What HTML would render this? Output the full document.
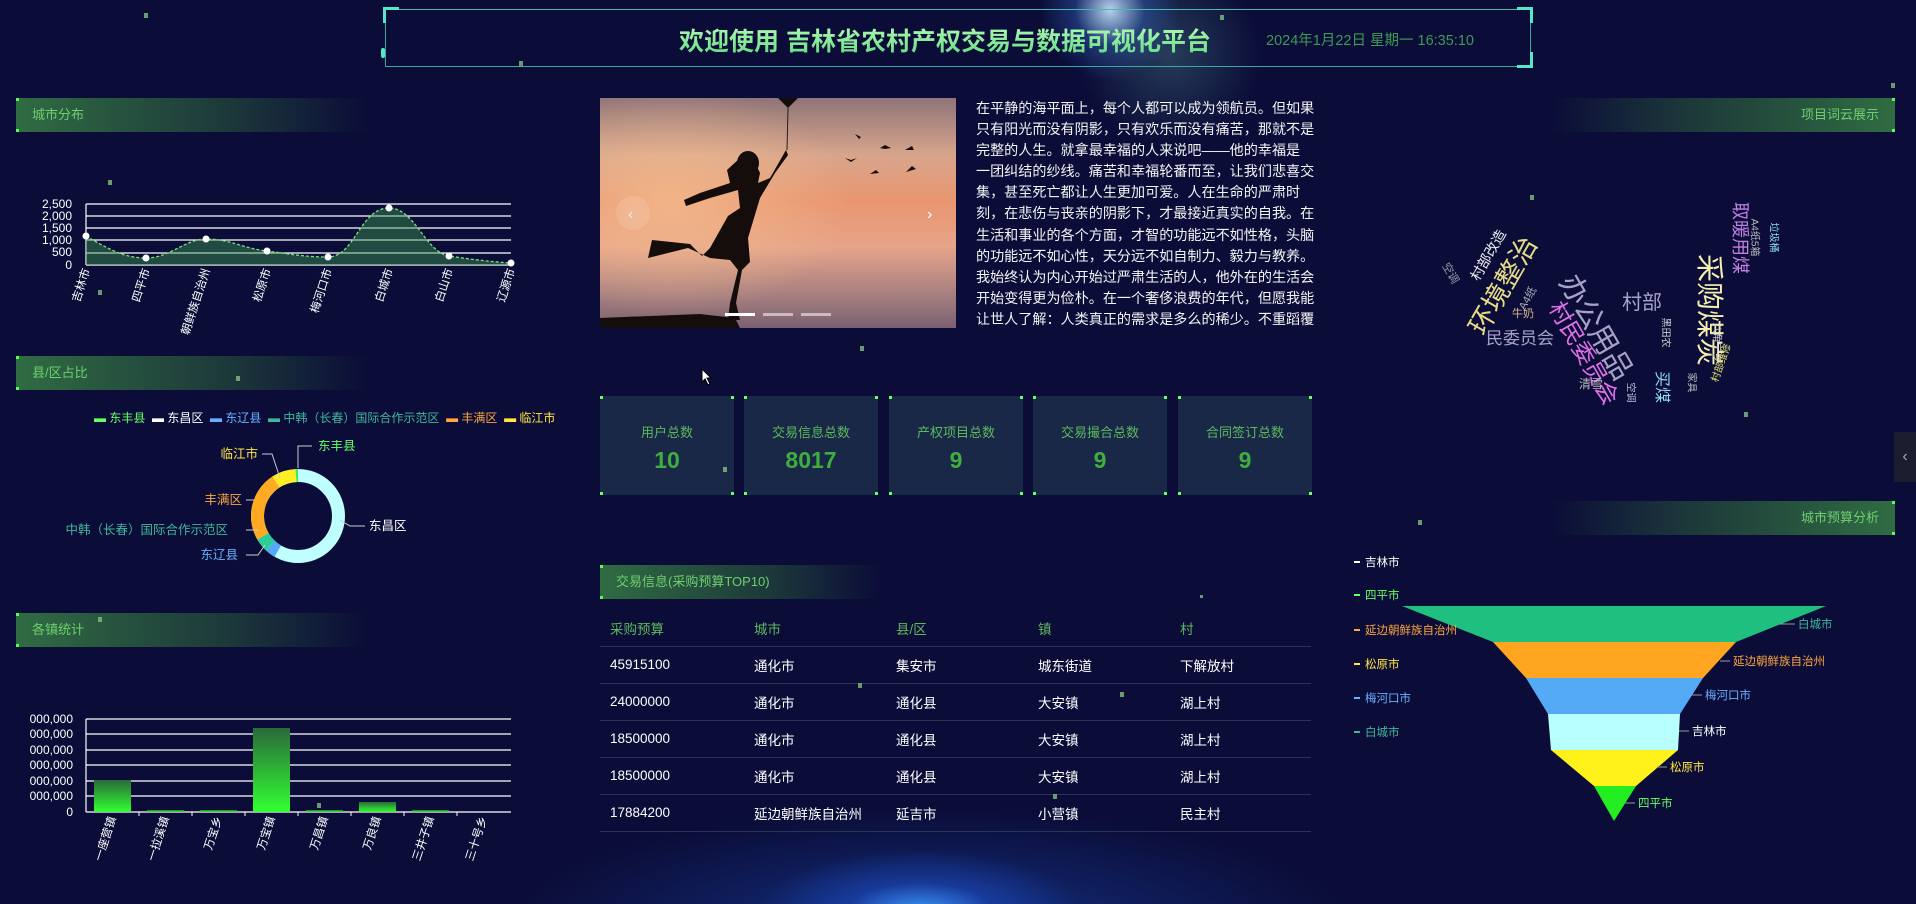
<!DOCTYPE html>
<html><head><meta charset="utf-8">
<style>
*{margin:0;padding:0;box-sizing:border-box}
body{width:1916px;height:904px;overflow:hidden;position:relative;font-family:"Liberation Sans","Noto Sans CJK SC",sans-serif;
background:radial-gradient(ellipse 160px 60px at 920px 910px,rgba(60,150,255,.95),rgba(30,80,200,.5) 45%,transparent 100%),
radial-gradient(ellipse 420px 120px at 930px 930px,rgba(30,90,220,.45),transparent 100%),
radial-gradient(circle 70px at 1110px 10px,rgba(200,230,255,.9),rgba(60,120,220,.35) 50%,transparent 100%),
radial-gradient(circle 90px at 1170px 55px,rgba(120,200,190,.25),transparent 100%),
#0b0d38;}
.abs{position:absolute}
.bar{position:absolute;height:34px;font-size:13px;color:#6fcf6f;line-height:34px;padding-left:16px}
.bl{background:linear-gradient(90deg,rgba(60,140,70,.75),rgba(50,110,60,.45) 60%,rgba(40,80,60,0));}
.br{background:linear-gradient(270deg,rgba(60,140,70,.75),rgba(50,110,60,.45) 60%,rgba(40,80,60,0));text-align:right;padding-right:16px}
.bar:before,.bar:after{content:"";position:absolute;width:3px;height:3px;background:#5f5}
.bl:before{left:0;top:0}.bl:after{left:0;bottom:0}
.br:before{right:0;top:0}.br:after{right:0;bottom:0}
.stat{position:absolute;top:396px;width:134px;height:99px;background:#1a2848;text-align:center}
.stat .l{margin-top:26px;font-size:13px;color:#5cb85c}
.stat .n{margin-top:6px;font-size:23px;color:#3fae3f;font-weight:bold}
.stat i{position:absolute;width:3px;height:3px;background:#6f6}
.dot{position:absolute;width:4px;height:5px;background:#7fbf7f;opacity:.8}
.p{position:absolute;left:976px;top:98px;font-size:14.1px;line-height:21.1px;color:#f4f4f4;white-space:nowrap}
table{position:absolute;left:600px;top:610px;width:711px;border-collapse:collapse;font-size:13.5px}
td{height:37px;padding-left:10px;color:#fff;border-bottom:1px solid #2a3258}
tr.h td{color:#5cb85c;height:36px}
.wc{position:absolute;white-space:nowrap;transform-origin:center}
</style></head><body>

<!-- header -->
<div class="abs" style="left:385px;top:9px;width:1146px;height:58px;border:1px solid #3aa7a0;border-top-color:#4bb8b0"></div>
<div class="abs" style="left:383px;top:7px;width:16px;height:16px;border-left:3px solid #55e8c8;border-top:3px solid #55e8c8"></div>
<div class="abs" style="left:1517px;top:7px;width:16px;height:16px;border-right:3px solid #55e8c8;border-top:3px solid #55e8c8"></div>
<div class="abs" style="left:1517px;top:52px;width:16px;height:16px;border-right:3px solid #55e8c8;border-bottom:3px solid #55e8c8"></div>
<div class="abs" style="left:381px;top:48px;width:4px;height:10px;background:#55e8c8;border-radius:2px"></div>
<div class="abs" style="left:679px;top:22px;font-size:25px;font-weight:bold;color:#9af59a;white-space:nowrap;background:linear-gradient(180deg,#b8ffb8,#5fd87f);-webkit-background-clip:text;background-clip:text;-webkit-text-fill-color:transparent">欢迎使用 吉林省农村产权交易与数据可视化平台</div>
<div class="abs" style="left:1266px;top:29px;font-size:14.5px;color:#3d9a55;white-space:nowrap">2024年1月22日 星期一 16:35:10</div>

<!-- left bars -->
<div class="bar bl" style="left:16px;top:98px;width:351px">城市分布</div>
<div class="bar bl" style="left:16px;top:356px;width:351px">县/区占比</div>
<div class="bar bl" style="left:16px;top:613px;width:351px">各镇统计</div>
<div class="bar br" style="left:1552px;top:98px;width:343px">项目词云展示</div>
<div class="bar br" style="left:1552px;top:501px;width:343px">城市预算分析</div>
<div class="bar bl" style="left:600px;top:565px;width:280px">交易信息(采购预算TOP10)</div>

<!-- line chart -->
<svg class="abs" style="left:0;top:190px" width="560" height="150" font-family="Liberation Sans,Noto Sans CJK SC,sans-serif">
<g stroke="#fff" stroke-width="1.2"><line x1="86" y1="14" x2="511" y2="14"/><line x1="86" y1="26" x2="511" y2="26"/><line x1="86" y1="38" x2="511" y2="38"/><line x1="86" y1="50" x2="511" y2="50"/><line x1="86" y1="63" x2="511" y2="63"/><line x1="86" y1="75" x2="511" y2="75"/><line x1="86" y1="14" x2="86" y2="75"/></g>
<g fill="#fff" font-size="12" text-anchor="end"><text x="72" y="18">2,500</text><text x="72" y="30">2,000</text><text x="72" y="42">1,500</text><text x="72" y="54">1,000</text><text x="72" y="66">500</text><text x="72" y="79">0</text></g>
<path d="M86,46 C110,60 125,68 146,68 C170,68 185,49 206,49 C230,49 245,59 267,61 C290,64 305,67 328,67 C355,67 360,18 389,18 C415,18 425,62 449,66 C475,70 495,72 511,73 L511,75 L86,75Z" fill="rgba(60,150,80,.45)"/>
<path d="M86,46 C110,60 125,68 146,68 C170,68 185,49 206,49 C230,49 245,59 267,61 C290,64 305,67 328,67 C355,67 360,18 389,18 C415,18 425,62 449,66 C475,70 495,72 511,73" fill="none" stroke="#7fdc7f" stroke-width="1.3" stroke-dasharray="3 2"/>
<g fill="#fff"><circle cx="86" cy="46" r="3.5"/><circle cx="146" cy="68" r="3.5"/><circle cx="206" cy="49" r="3.5"/><circle cx="267" cy="61" r="3.5"/><circle cx="328" cy="67" r="3.5"/><circle cx="389" cy="18" r="3.5"/><circle cx="449" cy="66" r="3.5"/><circle cx="511" cy="73" r="3.5"/></g>
<g fill="#fff" font-size="11.5" text-anchor="end">
<text transform="translate(90,80) rotate(-72)">吉林市</text><text transform="translate(150,80) rotate(-72)">四平市</text><text transform="translate(210,80) rotate(-72)">朝鲜族自治州</text><text transform="translate(271,80) rotate(-72)">松原市</text><text transform="translate(332,80) rotate(-72)">梅河口市</text><text transform="translate(393,80) rotate(-72)">白城市</text><text transform="translate(453,80) rotate(-72)">白山市</text><text transform="translate(515,80) rotate(-72)">辽源市</text></g>
</svg>

<!-- donut -->
<div class="abs" style="left:94px;top:409px;font-size:12px;white-space:nowrap">
<span style="color:#6f6">▬ 东丰县</span>&nbsp; <span style="color:#fff">▬ 东昌区</span>&nbsp; <span style="color:#6ab0ff">▬ 东辽县</span>&nbsp; <span style="color:#3fb89a">▬ 中韩（长春）国际合作示范区</span>&nbsp; <span style="color:#ffa640">▬ 丰满区</span>&nbsp; <span style="color:#ffe640">▬ 临江市</span></div>
<svg class="abs" style="left:0;top:440px" width="460" height="150" font-family="Liberation Sans,Noto Sans CJK SC,sans-serif" font-size="12.5">
<g transform="translate(298,76)" fill="none" stroke-width="13">
<circle r="40.5" stroke="#c0ffff"/>
<path d="M-20.2,35.1 A40.5,40.5 0 0 1 -27.4,29.8" stroke="#55aaf5"/>
<path d="M-27.4,29.8 A40.5,40.5 0 0 1 -35,20.3" stroke="#2ecc9a"/>
<path d="M-35,20.3 A40.5,40.5 0 0 1 -22,-34" stroke="#ffaa22"/>
<path d="M-22,-34 A40.5,40.5 0 0 1 -2,-40.4" stroke="#ffee22"/>
<path d="M-2,-40.4 A40.5,40.5 0 0 1 0,-40.5" stroke="#33ee55"/>
</g>
<g fill="none" stroke="#ccc" stroke-width="1"><path d="M298,28 V6 H312"/><path d="M280,38 L272,14 H262"/><path d="M254,60 H246"/><path d="M258,90 H246"/><path d="M265,105 L258,115 H246"/><path d="M340,80 L350,86 H365"/></g>
<text x="318" y="10" fill="#6f6">东丰县</text><text x="258" y="18" fill="#ffe640" text-anchor="end">临江市</text>
<text x="242" y="64" fill="#ffa640" text-anchor="end">丰满区</text><text x="228" y="94" fill="#3fb89a" text-anchor="end">中韩（长春）国际合作示范区</text>
<text x="238" y="119" fill="#6ab0ff" text-anchor="end">东辽县</text><text x="369" y="90" fill="#fff">东昌区</text>
</svg>

<!-- bar chart -->
<svg class="abs" style="left:0;top:700px" width="560" height="180" font-family="Liberation Sans,Noto Sans CJK SC,sans-serif">
<defs><linearGradient id="g" x1="0" y1="0" x2="0" y2="1"><stop offset="0" stop-color="#2a6a3a"/><stop offset="1" stop-color="#33ff33"/></linearGradient></defs>
<g stroke="#fff" stroke-width="1.2"><line x1="86" y1="19" x2="511" y2="19"/><line x1="86" y1="34" x2="511" y2="34"/><line x1="86" y1="50" x2="511" y2="50"/><line x1="86" y1="65" x2="511" y2="65"/><line x1="86" y1="81" x2="511" y2="81"/><line x1="86" y1="96" x2="511" y2="96"/><line x1="86" y1="112" x2="511" y2="112"/><line x1="86" y1="19" x2="86" y2="112"/></g>
<g fill="#fff" font-size="12" text-anchor="end"><text x="73" y="23">000,000</text><text x="73" y="38">000,000</text><text x="73" y="54">000,000</text><text x="73" y="69">000,000</text><text x="73" y="85">000,000</text><text x="73" y="100">000,000</text><text x="73" y="116">0</text></g>
<g fill="url(#g)"><rect x="94" y="80" width="37" height="32"/><rect x="147" y="110" width="37" height="2"/><rect x="200" y="110" width="37" height="2"/><rect x="253" y="28" width="37" height="84"/><rect x="306" y="110" width="37" height="2"/><rect x="359" y="102" width="37" height="10"/><rect x="412" y="110" width="37" height="2"/></g>
<g stroke="#fff"><line x1="139" y1="112" x2="139" y2="116"/><line x1="192" y1="112" x2="192" y2="116"/><line x1="245" y1="112" x2="245" y2="116"/><line x1="298" y1="112" x2="298" y2="116"/><line x1="351" y1="112" x2="351" y2="116"/><line x1="404" y1="112" x2="404" y2="116"/><line x1="457" y1="112" x2="457" y2="116"/></g>
<g fill="#fff" font-size="11.5" text-anchor="end">
<text transform="translate(116,118) rotate(-72)">一座营镇</text><text transform="translate(169,118) rotate(-72)">一拉溪镇</text><text transform="translate(222,118) rotate(-72)">万宝乡</text><text transform="translate(275,118) rotate(-72)">万宝镇</text><text transform="translate(328,118) rotate(-72)">万昌镇</text><text transform="translate(381,118) rotate(-72)">万良镇</text><text transform="translate(434,118) rotate(-72)">三井子镇</text><text transform="translate(487,118) rotate(-72)">三十号乡</text></g>
</svg>

<!-- carousel -->
<svg class="abs" style="left:600px;top:98px" width="356" height="230">
<defs>
<linearGradient id="sky" x1="0" y1="0" x2="0" y2="1"><stop offset="0" stop-color="#8e7478"/><stop offset=".25" stop-color="#d8a58c"/><stop offset=".45" stop-color="#e99670"/><stop offset=".65" stop-color="#e6a48a"/><stop offset=".85" stop-color="#a88080"/><stop offset="1" stop-color="#7a6070"/></linearGradient>
<radialGradient id="glow" cx=".2" cy=".45" r=".5"><stop offset="0" stop-color="#f5c090" stop-opacity=".7"/><stop offset="1" stop-color="#f5c090" stop-opacity="0"/></radialGradient>
</defs>
<rect width="356" height="230" fill="url(#sky)"/><rect width="356" height="230" fill="url(#glow)"/>
<g fill="#150c0c">
<path d="M178,0 h20 l-10,10 z"/>
<path d="M188,10 L187,52" stroke="#2a1a1a" stroke-width="1" fill="none"/>
<path d="M186,52 L170,80 L158,85 L160,75 L152,58 L140,60 L127,72 L130,85 L100,95 L84,102 L86,108 L110,100 L138,92 L140,110 L128,118 L110,150 L102,158 L90,146 L52,142 L48,160 L88,150 L110,160 L130,162 L138,172 L130,205 L128,222 L140,222 L136,205 L142,172 L150,164 L148,140 L160,100 L175,75 L188,57 Z"/>
<ellipse cx="148" cy="65" rx="11" ry="12"/>
<path d="M0,220 L100,216 L135,220 L140,230 L0,230Z"/>
<path d="M245,60 l6,2 l6,-2 l-6,4z M280,50 l5,-3 l6,3 l-6,1z M305,52 l7,-4 l2,4z M270,76 l6,-4 l3,3z M306,74 l6,-6 l4,3z M255,36 l6,3 l-2,2z"/>
</g>
<circle cx="33" cy="115" r="17" fill="rgba(255,255,255,.12)"/>
<text x="28" y="121" fill="#eee" font-size="16" font-family="Liberation Sans">‹</text>
<text x="327" y="121" fill="#fff" font-size="16" font-family="Liberation Sans">›</text>
<rect x="125" y="215" width="30" height="3" fill="#fff"/><rect x="163" y="215" width="30" height="3" fill="#cbb"/><rect x="201" y="215" width="30" height="3" fill="#cbb"/>
</svg>

<div class="p">在平静的海平面上，每个人都可以成为领航员。但如果<br>只有阳光而没有阴影，只有欢乐而没有痛苦，那就不是<br>完整的人生。就拿最幸福的人来说吧——他的幸福是<br>一团纠结的纱线。痛苦和幸福轮番而至，让我们悲喜交<br>集，甚至死亡都让人生更加可爱。人在生命的严肃时<br>刻，在悲伤与丧亲的阴影下，才最接近真实的自我。在<br>生活和事业的各个方面，才智的功能远不如性格，头脑<br>的功能远不如心性，天分远不如自制力、毅力与教养。<br>我始终认为内心开始过严肃生活的人，他外在的生活会<br>开始变得更为俭朴。在一个奢侈浪费的年代，但愿我能<br>让世人了解：人类真正的需求是多么的稀少。不重蹈覆</div>

<!-- stats -->
<div class="stat" style="left:600px"><i style="left:0;top:0"></i><i style="right:0;top:0"></i><i style="left:0;bottom:0"></i><i style="right:0;bottom:0"></i><div class="l">用户总数</div><div class="n">10</div></div>
<div class="stat" style="left:744px"><i style="left:0;top:0"></i><i style="right:0;top:0"></i><i style="left:0;bottom:0"></i><i style="right:0;bottom:0"></i><div class="l">交易信息总数</div><div class="n">8017</div></div>
<div class="stat" style="left:889px"><i style="left:0;top:0"></i><i style="right:0;top:0"></i><i style="left:0;bottom:0"></i><i style="right:0;bottom:0"></i><div class="l">产权项目总数</div><div class="n">9</div></div>
<div class="stat" style="left:1033px"><i style="left:0;top:0"></i><i style="right:0;top:0"></i><i style="left:0;bottom:0"></i><i style="right:0;bottom:0"></i><div class="l">交易撮合总数</div><div class="n">9</div></div>
<div class="stat" style="left:1178px"><i style="left:0;top:0"></i><i style="right:0;top:0"></i><i style="left:0;bottom:0"></i><i style="right:0;bottom:0"></i><div class="l">合同签订总数</div><div class="n">9</div></div>

<!-- table -->
<table>
<tr class="h"><td style="width:144px">采购预算</td><td style="width:142px">城市</td><td style="width:142px">县/区</td><td style="width:142px">镇</td><td>村</td></tr>
<tr><td>45915100</td><td>通化市</td><td>集安市</td><td>城东街道</td><td>下解放村</td></tr>
<tr><td>24000000</td><td>通化市</td><td>通化县</td><td>大安镇</td><td>湖上村</td></tr>
<tr><td>18500000</td><td>通化市</td><td>通化县</td><td>大安镇</td><td>湖上村</td></tr>
<tr><td>18500000</td><td>通化市</td><td>通化县</td><td>大安镇</td><td>湖上村</td></tr>
<tr><td>17884200</td><td>延边朝鲜族自治州</td><td>延吉市</td><td>小营镇</td><td>民主村</td></tr>
</table>

<!-- word cloud -->
<div class="wc" style="left:1655px;top:290px;font-size:28px;color:#f3eeb0;transform:rotate(90deg)">采购煤炭</div>
<div class="wc" style="left:1705px;top:225px;font-size:18px;color:#c080e0;transform:rotate(90deg)">取暖用煤</div>
<div class="wc" style="left:1737px;top:230px;font-size:10px;color:#bbb;transform:rotate(90deg)">A4纸5箱</div>
<div class="wc" style="left:1760px;top:230px;font-size:10px;color:#8de;transform:rotate(90deg)">垃圾桶</div>
<div class="wc" style="left:1540px;top:305px;font-size:29px;color:#a8a2c8;transform:rotate(60deg)">办公用品</div>
<div class="wc" style="left:1622px;top:286px;font-size:20px;color:#a8a2c8">村部</div>
<div class="wc" style="left:1447px;top:265px;font-size:27px;color:#e6dc88;transform:rotate(-60deg)">环境整治</div>
<div class="wc" style="left:1460px;top:245px;font-size:14px;color:#eee;transform:rotate(-60deg)">村部改造</div>
<div class="wc" style="left:1440px;top:265px;font-size:11px;color:#99a;transform:rotate(60deg)">空调</div>
<div class="wc" style="left:1486px;top:324px;font-size:17px;color:#a8a2c8">民委员会</div>
<div class="wc" style="left:1528px;top:335px;font-size:23px;color:#e070e8;transform:rotate(60deg)">村民委员会</div>
<div class="wc" style="left:1515px;top:290px;font-size:11px;color:#aab;transform:rotate(-60deg)">A4纸</div>
<div class="wc" style="left:1512px;top:305px;font-size:11px;color:#d8b890">牛奶</div>
<div class="wc" style="left:1579px;top:375px;font-size:12px;color:#bbb">清雪</div>
<div class="wc" style="left:1622px;top:385px;font-size:10px;color:#bbd;transform:rotate(90deg)">空调</div>
<div class="wc" style="left:1648px;top:375px;font-size:16px;color:#8ed8f0;transform:rotate(90deg)">买煤</div>
<div class="wc" style="left:1683px;top:375px;font-size:10px;color:#bbb;transform:rotate(90deg)">家具</div>
<div class="wc" style="left:1652px;top:325px;font-size:10px;color:#ccc;transform:rotate(90deg)">黑田农</div>
<div class="wc" style="left:1698px;top:335px;font-size:10px;color:#ccc;transform:rotate(90deg)">八角宁乡</div>
<div class="wc" style="left:1700px;top:355px;font-size:10px;color:#e0e070;transform:rotate(-70deg)">村部维修</div>

<!-- funnel -->
<svg class="abs" style="left:1340px;top:550px" width="576" height="290" font-family="Liberation Sans,Noto Sans CJK SC,sans-serif" font-size="11.5">
<path d="M62,56 H486 L396,92 H153 Z" fill="#1fbf80"/>
<path d="M153,92 H396 L363,128 H186 Z" fill="#ffa51f"/>
<path d="M186,128 H363 L340,164 H208 Z" fill="#55aaf5"/>
<path d="M208,164 H340 L338,200 H211 Z" fill="#b8ffff"/>
<path d="M211,200 H338 L296,236 H254 Z" fill="#fff21a"/>
<path d="M254,236 H296 L274,271 Z" fill="#22ee22"/>
<g stroke-width="2"><line x1="14" y1="12" x2="20" y2="12" stroke="#fff"/><line x1="14" y1="45" x2="20" y2="45" stroke="#6f6"/><line x1="14" y1="80" x2="20" y2="80" stroke="#ffa640"/><line x1="14" y1="114" x2="20" y2="114" stroke="#ffe640"/><line x1="14" y1="148" x2="20" y2="148" stroke="#6ab0ff"/><line x1="14" y1="182" x2="20" y2="182" stroke="#3fb89a"/></g>
<text x="25" y="16" fill="#fff">吉林市</text><text x="25" y="49" fill="#6f6">四平市</text><text x="25" y="84" fill="#ffa640">延边朝鲜族自治州</text><text x="25" y="118" fill="#ffe640">松原市</text><text x="25" y="152" fill="#6ab0ff">梅河口市</text><text x="25" y="186" fill="#3fb89a">白城市</text>
<g stroke="#999"><line x1="440" y1="74" x2="455" y2="74"/><line x1="380" y1="111" x2="390" y2="111"/><line x1="352" y1="145" x2="362" y2="145"/><line x1="339" y1="181" x2="349" y2="181"/><line x1="317" y1="217" x2="327" y2="217"/><line x1="285" y1="253" x2="295" y2="253"/></g>
<text x="458" y="78" fill="#3fb89a">白城市</text><text x="393" y="115" fill="#ffa640">延边朝鲜族自治州</text><text x="365" y="149" fill="#6ab0ff">梅河口市</text><text x="352" y="185" fill="#fff">吉林市</text><text x="330" y="221" fill="#ffe640">松原市</text><text x="298" y="257" fill="#6f6">四平市</text>
</svg>

<!-- right tab -->
<div class="abs" style="left:1894px;top:432px;width:22px;height:50px;background:#1c1e30;color:#aaa;font-size:16px;text-align:center;line-height:50px">‹</div>

<!-- stars -->
<div class="dot" style="left:144px;top:13px"></div><div class="dot" style="left:108px;top:180px"></div><div class="dot" style="left:98px;top:290px"></div>
<div class="dot" style="left:236px;top:376px"></div><div class="dot" style="left:723px;top:467px"></div><div class="dot" style="left:860px;top:346px"></div>
<div class="dot" style="left:1530px;top:195px"></div><div class="dot" style="left:1744px;top:412px"></div><div class="dot" style="left:1891px;top:83px"></div>
<div class="dot" style="left:1120px;top:692px"></div><div class="dot" style="left:1418px;top:520px"></div><div class="dot" style="left:858px;top:683px"></div>
<div class="dot" style="left:1053px;top:794px"></div><div class="dot" style="left:317px;top:803px"></div><div class="dot" style="left:519px;top:61px"></div>
<div class="dot" style="left:1220px;top:15px"></div><div class="dot" style="left:98px;top:617px"></div><div class="dot" style="left:1200px;top:595px;width:3px;height:3px"></div>
<svg class="abs" style="left:701px;top:368px" width="12" height="18"><path d="M1,1 L1,14 L4,11 L7,17 L9,16 L6,10 L10,10 Z" fill="#fff" stroke="#000" stroke-width="1"/></svg>
</body></html>
